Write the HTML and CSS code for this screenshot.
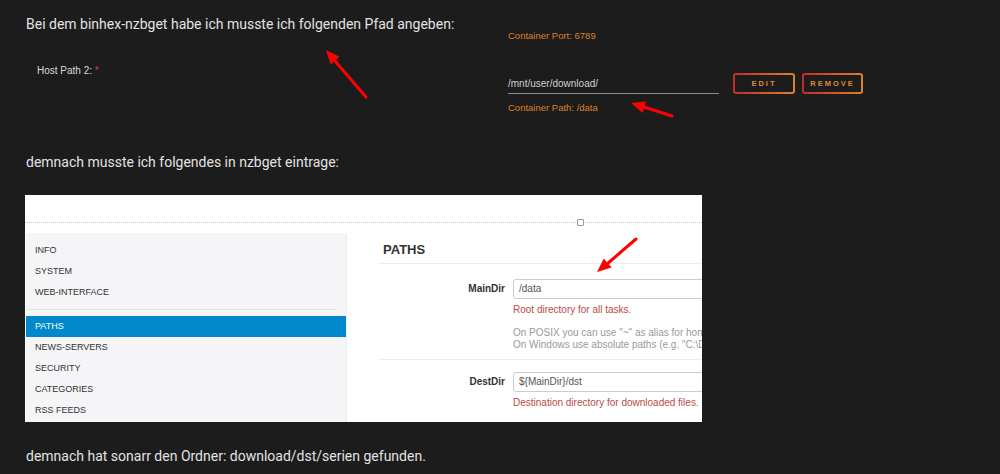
FILE: index.html
```html
<!DOCTYPE html>
<html lang="de">
<head>
  <meta charset="UTF-8">
  <meta name="viewport" content="width=device-width, initial-scale=1.0">
  <title>nzbget Pfade</title>
  <link rel="stylesheet" href="styles.css">
</head>
<body>
  <div class="post">
    <p class="line first">Bei dem binhex-nzbget habe ich musste ich folgenden Pfad angeben:</p>

    <!-- Screenshot 1: unraid Docker Einstellungen -->
    <div class="shot-dark">
      <div class="host-label">Host Path 2: <span class="req">*</span></div>
      <div class="host-fields">
        <div class="hint orange port">Container Port: 6789</div>
        <div class="field-row">
          <div class="path-input">/mnt/user/download/</div>
          <span class="btn-outline edit">EDIT</span>
          <span class="btn-outline remove">REMOVE</span>
        </div>
        <div class="hint orange cpath">Container Path: /data</div>
      </div>
    </div>

    <p class="line second">demnach musste ich folgendes in nzbget eintrage:</p>

    <!-- Screenshot 2: nzbget Settings -->
    <div class="shot-light">
      <div class="top-bar">
        <span class="handle"></span>
      </div>
      <div class="settings">
        <ul class="side-nav">
          <li>INFO</li>
          <li>SYSTEM</li>
          <li>WEB-INTERFACE</li>
          <li class="divider"></li>
          <li class="active">PATHS</li>
          <li>NEWS-SERVERS</li>
          <li>SECURITY</li>
          <li>CATEGORIES</li>
          <li>RSS FEEDS</li>
        </ul>
        <div class="section">
          <h3>PATHS</h3>
          <div class="opt">
            <label>MainDir</label>
            <div class="opt-body">
              <div class="text-input">/data</div>
              <div class="help">Root directory for all tasks.</div>
              <div class="note">On POSIX you can use "~" as alias for home<br>On Windows use absolute paths (e.g. "C:\Do</div>
            </div>
          </div>
          <div class="opt sep">
            <label>DestDir</label>
            <div class="opt-body">
              <div class="text-input">${MainDir}/dst</div>
              <div class="help">Destination directory for downloaded files.</div>
            </div>
          </div>
        </div>
      </div>
    </div>

    <p class="line third">demnach hat sonarr den Ordner: download/dst/serien gefunden.</p>
  </div>

  <!-- rote Pfeile -->
  <svg class="arrows" width="1000" height="474" viewBox="0 0 1000 474">
    <g fill="#ff0000" stroke="#ff0000" stroke-width="3" stroke-linecap="round">
      <line x1="366" y1="97" x2="335" y2="61"/>
      <polygon stroke="none" points="326,50 339.6,56.8 330.5,64.6"/>
      <line x1="672" y1="116" x2="644" y2="107"/>
      <polygon stroke="none" points="631,103 646.1,101.5 642.5,112.9"/>
      <line x1="636" y1="239" x2="607" y2="264"/>
      <polygon stroke="none" points="597,272 611.6,267.6 603.8,258.4"/>
    </g>
  </svg>
</body>
</html>
```

FILE: styles.css
```css
body {
  margin: 0;
  background-color: #1c1c1c;
  font-family: Roboto, "Liberation Sans", sans-serif;
  color: #e2e2e2;
  position: relative;
  overflow: hidden;
  height: 474px;
}
.post {
  padding-left: 26px;
}
.line {
  margin: 0;
  font-size: 14px;
  line-height: 20px;
}
.first {
  padding-top: 14px;
}
.second {
  margin-top: 27px;
}
.third {
  margin-top: 24px;
}

/* Screenshot 1 */
.shot-dark {
  display: flex;
  height: 95px;
  margin-top: -4px;
  overflow: hidden;
  font-family: "Liberation Sans", Arial, sans-serif;
}
.host-label {
  width: 471px;
  padding-left: 11px;
  padding-top: 36px;
  font-size: 10px;
  line-height: 10px;
  color: #d8d8d8;
}
.req {
  color: #e0393e;
}
.host-fields {
  display: flex;
  flex-direction: column;
}
.hint {
  font-size: 9.5px;
  line-height: 12px;
}
.orange {
  color: #d9822b;
}
.port {
  margin-top: 0;
}
.field-row {
  display: flex;
  align-items: center;
  height: 21px;
  margin-top: 31px;
}
.path-input {
  width: 211px;
  height: 20px;
  box-sizing: border-box;
  border-bottom: 1px solid #8a8a8a;
  font-size: 10px;
  line-height: 19px;
  color: #cfcfcf;
}
.btn-outline {
  display: flex;
  align-items: center;
  justify-content: center;
  height: 21px;
  box-sizing: border-box;
  border: 2px solid transparent;
  border-radius: 3px;
  background: linear-gradient(#1c1c1c, #1c1c1c) padding-box,
    linear-gradient(90deg, #c42a2c, #d9822b) border-box;
  font-size: 7.5px;
  font-weight: bold;
  letter-spacing: 2px;
  color: #de8a35;
}
.edit {
  width: 62px;
  margin-left: 14px;
}
.remove {
  width: 61px;
  margin-left: 7px;
}
.cpath {
  margin-top: 8px;
}

/* Screenshot 2 */
.shot-light {
  width: 677px;
  height: 227px;
  margin-left: -1px;
  margin-top: 23px;
  background-color: #fff;
  overflow: hidden;
  font-family: "Liberation Sans", Arial, sans-serif;
}
.top-bar {
  position: relative;
  height: 27px;
  border-bottom: 1px dotted #c8c8c8;
}
.handle {
  position: absolute;
  left: 552px;
  bottom: -4px;
  width: 5px;
  height: 5px;
  border: 1px solid #9a9a9a;
  border-radius: 1px;
  background-color: #fff;
}
.settings {
  display: flex;
  margin-top: 10px;
  height: 189px;
}
.side-nav {
  list-style: none;
  margin: 0;
  padding: 7px 0 0 0;
  width: 321px;
  flex-shrink: 0;
  margin-left: 1px;
  background-color: #f5f5f7;
  border-right: 1px solid #eceef0;
  box-sizing: border-box;
}
.side-nav li {
  height: 21px;
  line-height: 21px;
  padding-left: 9px;
  font-size: 9px;
  color: #333;
}
.side-nav .divider {
  height: 1px;
  margin: 6px 10px 6px 0;
  background-color: #e3e3e6;
}
.side-nav .active {
  background-color: #0088cc;
  color: #fff;
}
.section {
  flex: 1;
  padding-left: 31px;
  overflow: hidden;
  white-space: nowrap;
}
.section h3 {
  margin: 0;
  padding: 7px 0 3px 5px;
  font-size: 13px;
  line-height: 20px;
  color: #333;
  border-bottom: 1px solid #eee;
}
.opt {
  display: flex;
  margin-top: 15px;
}
.opt.sep {
  margin-top: 8px;
  padding-top: 12px;
  border-top: 1px solid #eee;
}
.opt label {
  width: 127px;
  flex-shrink: 0;
  text-align: right;
  font-size: 10px;
  font-weight: bold;
  line-height: 20px;
  color: #333;
}
.opt-body {
  margin-left: 8px;
}
.text-input {
  width: 300px;
  height: 20px;
  box-sizing: border-box;
  border: 1px solid #ccc;
  border-radius: 3px;
  padding-left: 5px;
  font-size: 10px;
  line-height: 18px;
  color: #555;
}
.help {
  margin-top: 5px;
  font-size: 10px;
  line-height: 12px;
  color: #b94a48;
}
.note {
  margin-top: 11px;
  font-size: 10px;
  line-height: 12px;
  color: #999;
}

.arrows {
  position: absolute;
  left: 0;
  top: 0;
  pointer-events: none;
}
```
